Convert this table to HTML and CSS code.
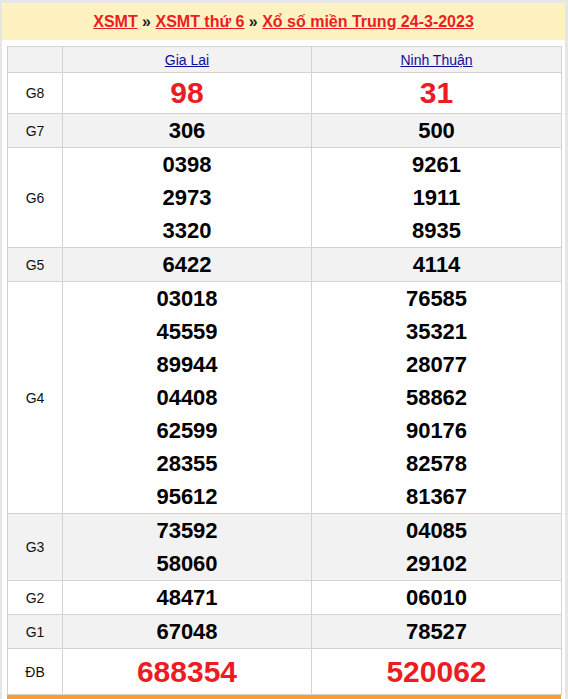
FILE: index.html
```html
<!DOCTYPE html>
<html lang="vi">
<head>
<meta charset="utf-8">
<title>XSMT 24-3-2023</title>
<link rel="stylesheet" href="styles.css">
</head>
<body>
<div class="box">
  <h2 class="title">
    <a href="#">XSMT</a> » <a href="#">XSMT thứ 6</a> » <a href="#">Xổ số miền Trung 24-3-2023</a>
  </h2>
  <div class="wrap">
    <table class="kq">
      <colgroup><col class="c0"><col class="c1"><col class="c2"></colgroup>
      <tr class="head alt"><th></th><th><a href="#">Gia Lai</a></th><th><a href="#">Ninh Thuận</a></th></tr>
      <tr class="g8"><td class="lb">G8</td><td><div class="n red big">98</div></td><td><div class="n red big">31</div></td></tr>
      <tr class="alt"><td class="lb">G7</td><td><div class="n">306</div></td><td><div class="n">500</div></td></tr>
      <tr><td class="lb">G6</td><td><div class="n">0398</div><div class="n">2973</div><div class="n">3320</div></td><td><div class="n">9261</div><div class="n">1911</div><div class="n">8935</div></td></tr>
      <tr class="alt"><td class="lb">G5</td><td><div class="n">6422</div></td><td><div class="n">4114</div></td></tr>
      <tr><td class="lb">G4</td><td><div class="n">03018</div><div class="n">45559</div><div class="n">89944</div><div class="n">04408</div><div class="n">62599</div><div class="n">28355</div><div class="n">95612</div></td><td><div class="n">76585</div><div class="n">35321</div><div class="n">28077</div><div class="n">58862</div><div class="n">90176</div><div class="n">82578</div><div class="n">81367</div></td></tr>
      <tr class="alt"><td class="lb">G3</td><td><div class="n">73592</div><div class="n">58060</div></td><td><div class="n">04085</div><div class="n">29102</div></td></tr>
      <tr><td class="lb">G2</td><td><div class="n">48471</div></td><td><div class="n">06010</div></td></tr>
      <tr class="alt"><td class="lb">G1</td><td><div class="n">67048</div></td><td><div class="n">78527</div></td></tr>
      <tr class="db"><td class="lb">ĐB</td><td><div class="n red big">688354</div></td><td><div class="n red big">520062</div></td></tr>
    </table>
    <div class="bar"></div>
  </div>
</div>
</body>
</html>
```

FILE: styles.css
```css
html, body {
  margin: 0;
  padding: 0;
}
body {
  background: #e6e6e6;
  font-family: "Liberation Sans", Arial, sans-serif;
  padding: 3px 3px 0 2px;
}
.box {
  background: #ffffff;
  height: 696px;
}
.title {
  margin: 0;
  height: 37px;
  background: #fff2c1;
  font-size: 16px;
  font-weight: bold;
  line-height: 37px;
  text-align: center;
  color: #222222;
}
.title a {
  color: #ec1c24;
  text-decoration: underline;
}
.wrap {
  padding: 6px 4px 0 5px;
}
.kq {
  width: 554px;
  border-collapse: collapse;
  table-layout: fixed;
  border: 1px solid #d8d2cb;
}
.c0 { width: 55px; }
.c1 { width: 249px; }
.c2 { width: 250px; }
.kq th, .kq td {
  border: 1px solid #d8d2cb;
  padding: 0;
  text-align: center;
  vertical-align: middle;
}
.kq tr.alt td, .kq tr.alt th {
  background: #f2f2f2;
}
.head th {
  height: 25px;
  font-size: 14px;
  font-weight: normal;
}
.head a {
  color: #0d0d9c;
  text-decoration: underline;
}
.lb {
  font-size: 14px;
  color: #111111;
}
.n {
  font-size: 22px;
  font-weight: bold;
  line-height: 33px;
  color: #000000;
}
.n.red {
  color: #ec1c24;
}
.g8 .n {
  font-size: 30px;
  line-height: 40px;
}
.db .n {
  font-size: 30px;
  line-height: 45px;
}
.bar {
  height: 8px;
  background: #f89c33;
  width: 554px;
}
```
